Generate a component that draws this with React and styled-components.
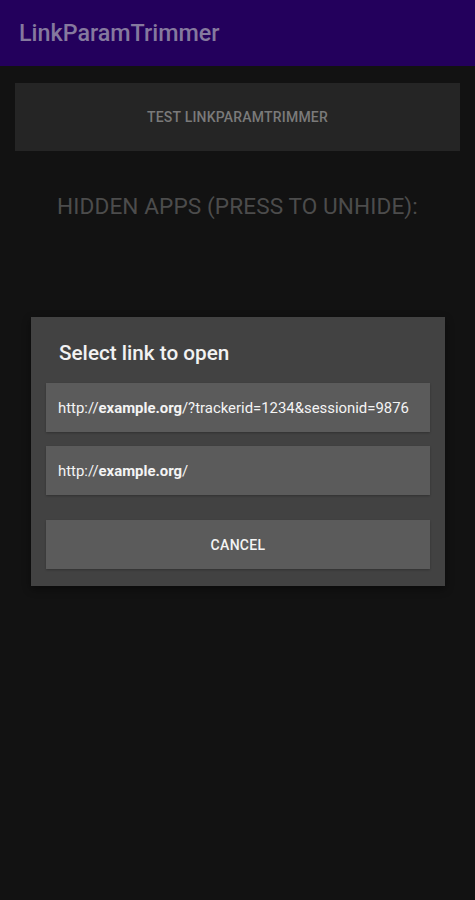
import React from 'react';
import styled, { createGlobalStyle } from 'styled-components';

const GlobalStyle = createGlobalStyle`
    html, body {
        margin: 0;
        padding: 0;
        background: #121212;
    }
    body {
        font-family: Roboto, "Noto Sans", sans-serif;
    }
`;

const Screen = styled.div`
    width: 475px;
    height: 900px;
    background: #121212;
    position: relative;
    overflow: hidden;
`;

const AppBar = styled.header`
    height: 66px;
    background: #23005c;
    display: flex;
    align-items: center;
    padding: 0 19px;
    box-sizing: border-box;
`;

const AppTitle = styled.h1`
    margin: 0;
    font-size: 23.3px;
    font-weight: 500;
    color: #85799e;
    letter-spacing: 0;
`;

const Content = styled.main`
    display: flex;
    flex-direction: column;
    align-items: stretch;
    padding: 17px 15px 0;
`;

const TestButton = styled.button`
    height: 68px;
    border: none;
    background: #252525;
    color: #7a7a7a;
    font-family: Roboto, sans-serif;
    font-size: 14px;
    font-weight: 500;
    letter-spacing: 0.2px;
    text-transform: uppercase;
`;

const SectionLabel = styled.p`
    margin: 42px 0 0;
    text-align: center;
    font-size: 22.6px;
    color: #4c4c4c;
    letter-spacing: 0.1px;
`;

const Dialog = styled.div`
    position: absolute;
    left: 31px;
    top: 317px;
    width: 414px;
    background: #424242;
    box-shadow: 0 3px 8px rgba(0, 0, 0, 0.45);
    padding: 24px 15px 17px;
    box-sizing: border-box;
    display: flex;
    flex-direction: column;
`;

const DialogTitle = styled.h2`
    margin: 0 0 18px 13px;
    font-size: 20.7px;
    font-weight: 500;
    color: #f2f2f2;
`;

const LinkList = styled.div`
    display: flex;
    flex-direction: column;
    gap: 14px;
`;

const LinkRow = styled.button`
    height: 49px;
    border: none;
    background: #5b5b5b;
    color: #f4f4f4;
    text-align: left;
    padding: 0 12px;
    font-family: Roboto, sans-serif;
    font-size: 14.9px;
    box-shadow: 0 1px 2px rgba(0, 0, 0, 0.25);
    b {
        font-weight: 700;
    }
`;

const CancelButton = styled(LinkRow)`
    margin-top: 25px;
    text-align: center;
    font-size: 14px;
    font-weight: 500;
    text-transform: uppercase;
    letter-spacing: 0.3px;
`;

const links = [
    { host: 'example.org', rest: '/?trackerid=1234&sessionid=9876' },
    { host: 'example.org', rest: '/' },
];

export default function App() {
    return (
        <Screen>
            <GlobalStyle />
            <AppBar>
                <AppTitle>LinkParamTrimmer</AppTitle>
            </AppBar>
            <Content>
                <TestButton>Test LinkParamTrimmer</TestButton>
                <SectionLabel>HIDDEN APPS (PRESS TO UNHIDE):</SectionLabel>
            </Content>
            <Dialog>
                <DialogTitle>Select link to open</DialogTitle>
                <LinkList>
                    {links.map((link, index) => (
                        <LinkRow key={index}>
                            http://<b>{link.host}</b>
                            {link.rest}
                        </LinkRow>
                    ))}
                </LinkList>
                <CancelButton>Cancel</CancelButton>
            </Dialog>
        </Screen>
    );
}
